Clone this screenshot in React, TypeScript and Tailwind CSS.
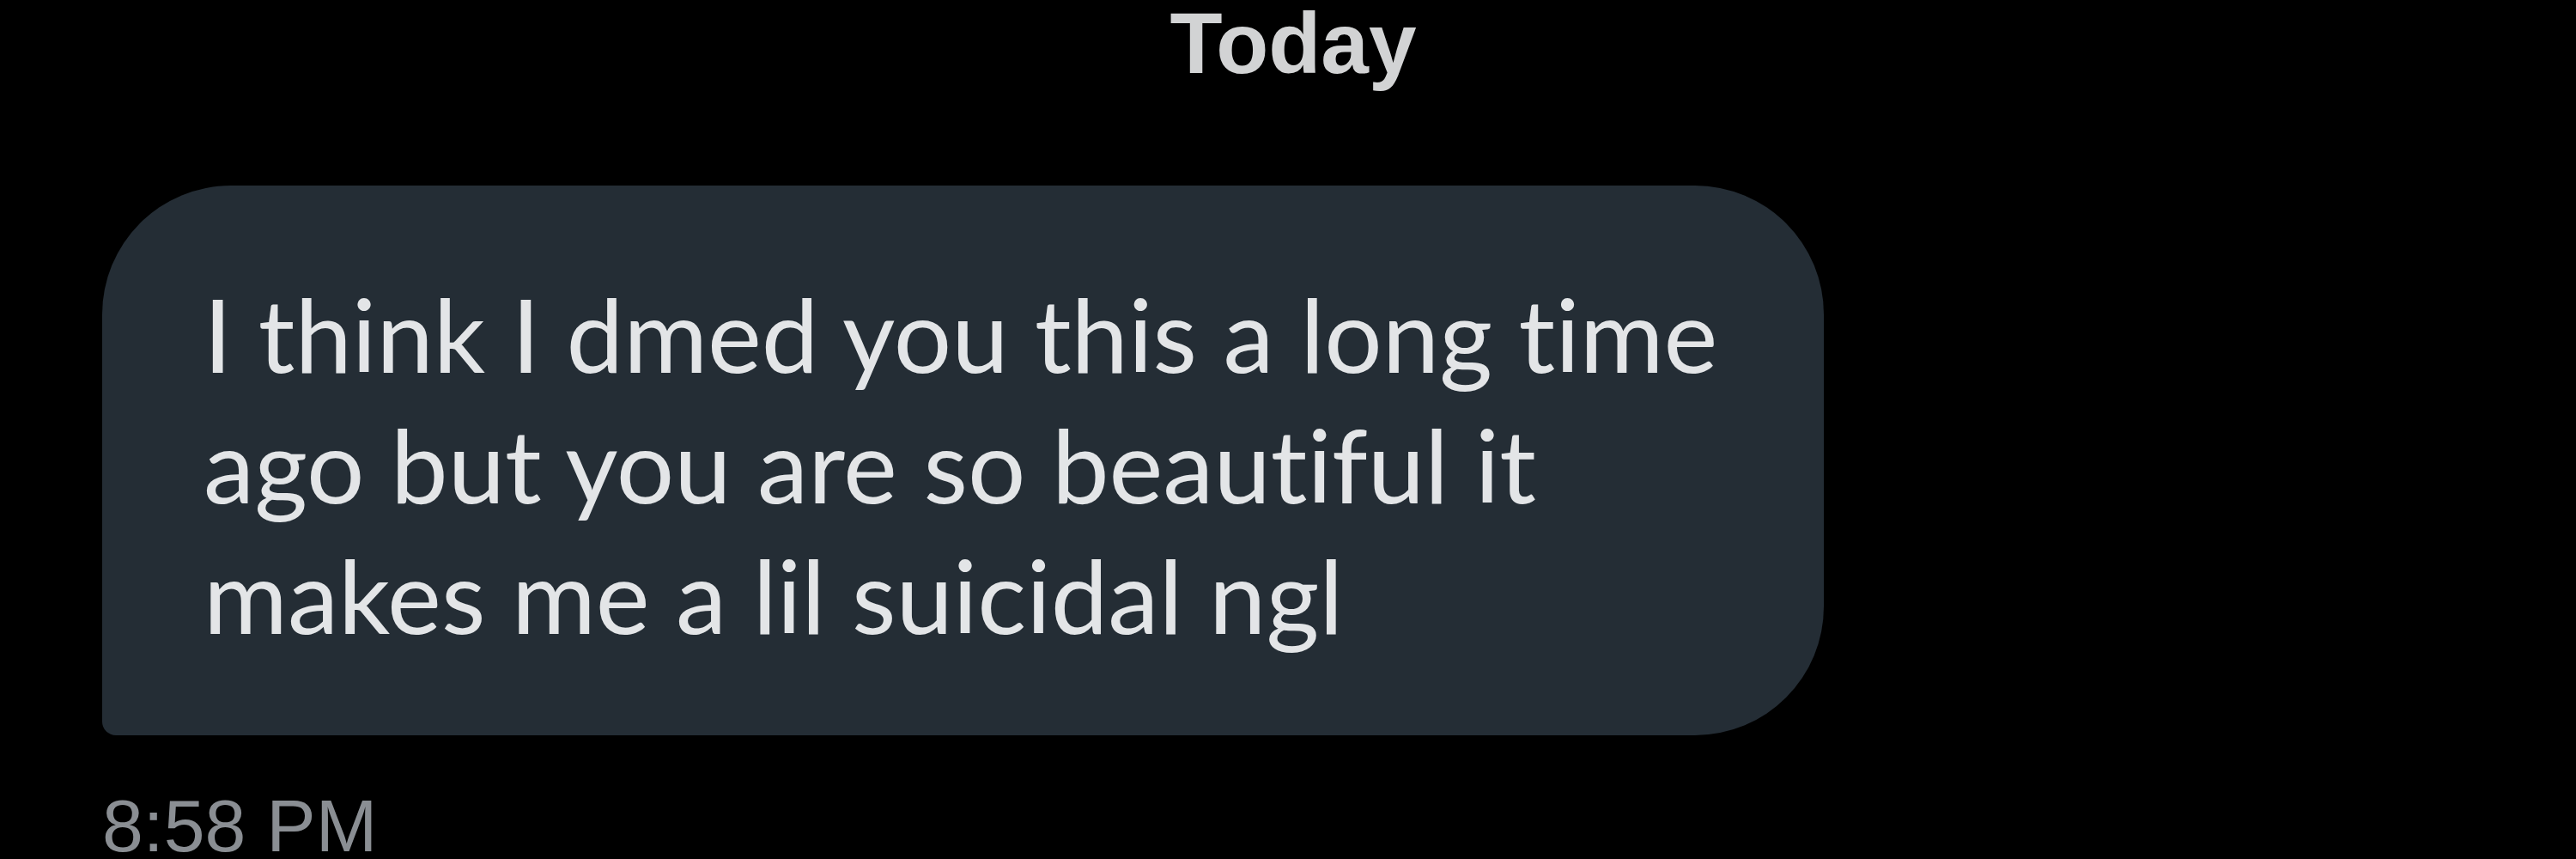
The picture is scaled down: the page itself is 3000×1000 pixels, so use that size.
export default function App() {
  return (
    <div className="w-[3000px] h-[1000px] bg-black flex flex-col overflow-hidden">
      <div className="pl-[12px] text-center font-['Liberation_Sans',Arial,sans-serif] font-bold text-[100px] leading-none text-[#d2d3d4]">
        Today
      </div>

      <div className="mt-[116px] ml-[119px] w-[2005px] h-[640px] bg-[#242d35] rounded-[150px] rounded-bl-[16px] pl-[118px] pt-[96px]">
        <p className="font-['Lato',sans-serif] text-[119px] leading-[152px] text-[#e3e5e7] whitespace-nowrap [font-variant-ligatures:none]">
          I think I dmed you this a long time
          <br />
          ago but you are so beautiful it
          <br />
          makes me a lil suicidal ngl
        </p>
      </div>

      <div className="mt-[66px] ml-[119px] font-['Liberation_Sans',Arial,sans-serif] text-[86px] leading-[78px] text-[#8a8e93]">
        8:58 PM
      </div>
    </div>
  );
}
